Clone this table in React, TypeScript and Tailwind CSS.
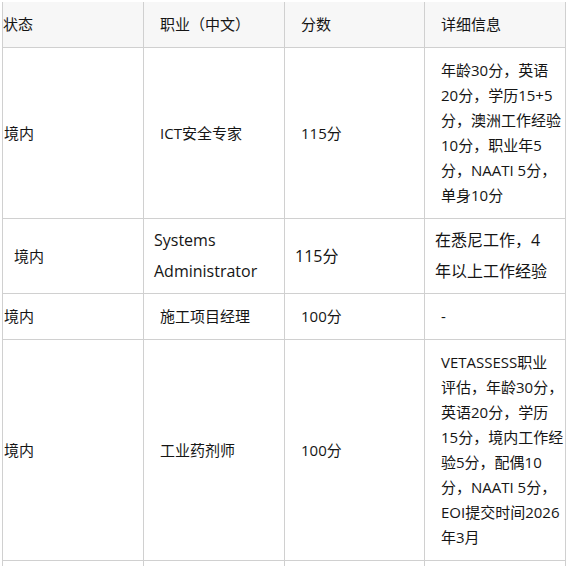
const font = { fontFamily: '"Open Sans", "Noto Sans CJK SC", sans-serif' };

type Row = {
  h: string;
  big?: boolean;
  status: string;
  job: string[];
  score: string;
  detail: string[];
};

const rows: Row[] = [
  {
    h: "h-[171px]",
    status: "境内",
    job: ["ICT安全专家"],
    score: "115分",
    detail: ["年龄30分，英语", "20分，学历15+5", "分，澳洲工作经验", "10分，职业年5", "分，NAATI 5分，", "单身10分"],
  },
  {
    h: "h-[75px]",
    big: true,
    status: "境内",
    job: ["Systems", "Administrator"],
    score: "115分",
    detail: ["在悉尼工作，4", "年以上工作经验"],
  },
  {
    h: "h-[46px]",
    status: "境内",
    job: ["施工项目经理"],
    score: "100分",
    detail: ["-"],
  },
  {
    h: "h-[221px]",
    status: "境内",
    job: ["工业药剂师"],
    score: "100分",
    detail: [
      "VETASSESS职业",
      "评估，年龄30分，",
      "英语20分，学历",
      "15分，境内工作经",
      "验5分，配偶10",
      "分，NAATI 5分，",
      "EOI提交时间2026",
      "年3月",
    ],
  },
];

const Lines = ({ lines }: { lines: string[] }) => (
  <div>
    {lines.map((l, i) => (
      <div key={i} className="whitespace-nowrap">
        {l}
      </div>
    ))}
  </div>
);

export default function App() {
  return (
    <div className="min-h-screen bg-white text-[#151515] pt-[2px]" style={font}>
      <div className="ml-[2px] w-[564px] border-l border-[#d0d0d0] grid grid-cols-[141px_141px_140px_141px] text-[15px] leading-[25px]">
        {/* header */}
        <div className="h-[46px] bg-[#f7f7f7] border-r border-b border-[#d0d0d0] flex items-center">状态</div>
        <div className="h-[46px] bg-[#f7f7f7] border-r border-b border-[#d0d0d0] flex items-center pl-4">职业（中文）</div>
        <div className="h-[46px] bg-[#f7f7f7] border-r border-b border-[#d0d0d0] flex items-center pl-4">分数</div>
        <div className="h-[46px] bg-[#f7f7f7] border-r border-b border-[#d0d0d0] flex items-center pl-4">详细信息</div>

        {rows.map((r, i) => (
          <div key={i} className="contents">
            <div className={`${r.h} border-r border-b border-[#d0d0d0] flex items-center ${r.big ? "pl-[11px]" : "pl-px"}`}>
              {r.status}
            </div>
            <div
              className={`${r.h} border-r border-b border-[#d0d0d0] flex items-center ${
                r.big ? "pl-[10px] text-[16px] leading-[31px]" : "pl-4"
              }`}
            >
              <Lines lines={r.job} />
            </div>
            <div
              className={`${r.h} border-r border-b border-[#d0d0d0] flex items-center ${
                r.big ? "pl-[10px] text-[16px] leading-[31px]" : "pl-4"
              }`}
            >
              {r.score}
            </div>
            <div
              className={`${r.h} border-r border-b border-[#d0d0d0] flex items-center ${
                r.big ? "pl-[10px] text-[16px] leading-[31px]" : "pl-4"
              }`}
            >
              <Lines lines={r.detail} />
            </div>
          </div>
        ))}

        {/* next row, cut off by the window */}
        <div className="h-[5px] border-r border-[#d0d0d0]" />
        <div className="h-[5px] border-r border-[#d0d0d0]" />
        <div className="h-[5px] border-r border-[#d0d0d0]" />
        <div className="h-[5px] border-r border-[#d0d0d0]" />
      </div>
    </div>
  );
}
